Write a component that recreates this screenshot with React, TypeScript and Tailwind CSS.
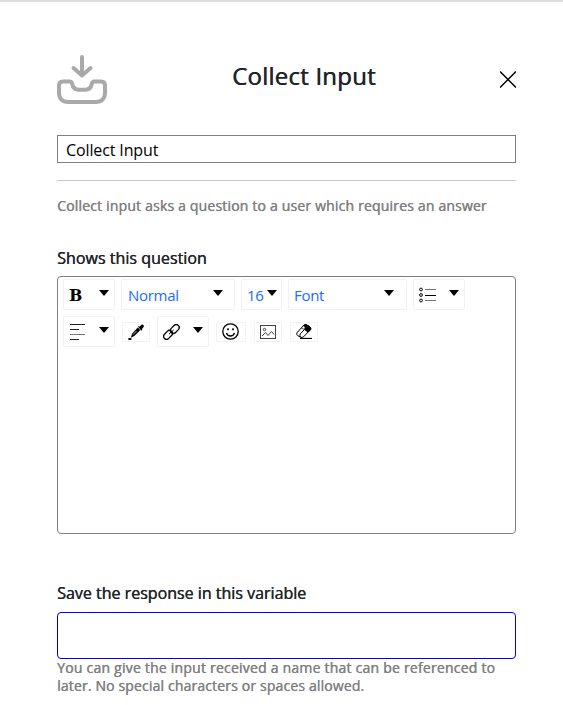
import type { ReactNode } from "react";

function Caret({ className = "" }: { className?: string }) {
  return (
    <svg className={`h-[6px] w-[10px] shrink-0 ${className}`} viewBox="0 0 10 6">
      <path d="M0 0H10L5 6Z" fill="#000" />
    </svg>
  );
}

function Tool({ className, children }: { className: string; children: ReactNode }) {
  return (
    <div className={`flex shrink-0 items-center rounded-[2px] border border-[#f1f1f1] ${className}`}>
      {children}
    </div>
  );
}

function InboxIcon() {
  return (
    <svg className="mt-[52px] h-[50px] w-[50px]" viewBox="0 0 50 50" fill="none" stroke="#a9a9a9" strokeWidth="4" strokeLinecap="round" strokeLinejoin="round">
      <path d="M25 3V21M16.500 14L25 21.500L33.500 14" />
      <path d="M6 27.500H12.500C14 27.500 14.800 28.300 15.200 30C16 33.800 18 35.700 21.500 35.700H28.500C32 35.700 34 33.800 34.800 30C35.200 28.300 36 27.500 37.500 27.500H44C46.500 27.500 48 29 48 31.500V39C48 44.500 44.500 48 39 48H11C5.500 48 2 44.500 2 39V31.500C2 29 3.500 27.500 6 27.500Z" />
    </svg>
  );
}

function ListIcon() {
  return (
    <svg className="h-[16px] w-[18px]" viewBox="0 0 18 16" fill="none" stroke="#000">
      <circle cx="2" cy="2.500" r="1.400" />
      <circle cx="2" cy="8" r="1.400" />
      <circle cx="2" cy="13.500" r="1.400" />
      <path d="M6 2.500H17M6 13.500H17" stroke="#777" />
      <path d="M6 8.500H17" />
    </svg>
  );
}

function AlignIcon() {
  return (
    <svg className="h-[16px] w-[15px]" viewBox="0 0 15 16" stroke="#222">
      <path d="M0 .5H15M0 5.500H9M0 15.500H9" />
      <path d="M0 10.500H15" stroke="#777" />
    </svg>
  );
}

function DropperIcon() {
  return (
    <svg className="h-[16px] w-[16px]" viewBox="0 0 16 16">
      <path d="M9.800 2.600L10.800 2.300L11.600 2.800L13.200 1C14.300-.2 16.600 1.300 15.600 3L14 5L14.200 6L13.400 6.800Z" fill="#000" />
      <path d="M9.800 3.400L4.200 9.600L2.800 13.700L6.300 12L12.400 5.900Z" fill="#000" />
      <path d="M8.500 7L5 10.600" stroke="#fff" strokeWidth=".7" fill="none" />
      <ellipse cx="1.900" cy="15" rx="1.900" ry=".9" fill="#000" />
    </svg>
  );
}

function LinkIcon() {
  return (
    <svg className="h-[16px] w-[17px]" viewBox="0 0 17 16" fill="none" stroke="#000" strokeWidth="1.300">
      <rect x="-5" y="-3" width="10" height="6" rx="3" transform="translate(5 10.900) rotate(-46)" />
      <rect x="-5" y="-3" width="10" height="6" rx="3" transform="translate(11.800 5) rotate(-46)" />
      <path d="M6 10.100L10.700 5.900" strokeWidth="1" />
    </svg>
  );
}

function SmileIcon() {
  return (
    <svg className="-ml-px h-[17px] w-[17px]" viewBox="0 0 17 17" fill="none" stroke="#000" strokeWidth="1.300">
      <circle cx="8.500" cy="8.500" r="7.700" />
      <path d="M4.500 10C5.700 14 11.300 14 12.500 10" />
      <circle cx="6" cy="6.300" r="1" fill="#000" stroke="none" />
      <circle cx="11" cy="6.300" r="1" fill="#000" stroke="none" />
    </svg>
  );
}

function PictureIcon() {
  return (
    <svg className="h-[14px] w-[16px]" viewBox="0 0 16 14" fill="none" stroke="#444">
      <rect x=".5" y=".5" width="15" height="13" />
      <circle cx="4.500" cy="4.500" r="1.200" />
      <path d="M2 11L5.500 7.500L8 10.500L11.500 6.500L14 9.500" />
    </svg>
  );
}

function EraserIcon() {
  return (
    <svg className="h-[15px] w-[17px]" viewBox="0 0 17 15" fill="none" stroke="#000">
      <path d="M1 8.800L7.500 1.500Q8.500.5 10 .6L13.500 2.500Q15.500 4 14.500 5.700L7.500 12.800Q6 14 4.500 13.200L1.700 11.700Q.2 10.700 1 8.800Z" />
      <path d="M7.700 1.700Q8.500.5 10 .6L13.500 2.500Q15.500 4 14.500 5.700L12 8.300L8.700 5.500L9.200 3.500Z" fill="#000" />
      <path d="M8.500 5.500L4.300 9.800Q3.300 11.200 4.500 13" />
      <path d="M5.500 4.300L8.500 5.500" strokeWidth=".7" />
      <path d="M4 14.400H16" strokeWidth="1.100" />
    </svg>
  );
}

export default function App() {
  return (
    <main className="h-[705px] w-[563px] overflow-hidden border-t-2 border-[#dddce8] bg-white px-[57px] font-['Open_Sans','Noto_Sans',sans-serif] text-[#212529]">
      <div className="w-[459px]">
        <header className="flex h-[133px] items-start">
          <InboxIcon />
          <h1 className="ml-[125px] mt-[56px] whitespace-nowrap text-[24px] font-medium leading-[36px] tracking-[0.22px] [text-shadow:0.5px_0_0_#212529]">Collect Input</h1>
          <svg className="ml-auto mt-[69px] h-[17px] w-[16px]" viewBox="0 0 16 17" stroke="#000" strokeWidth="1.500">
            <path d="M0 .5L16 16.500M16 .5L0 16.500" />
          </svg>
        </header>

        <div className="flex h-[28px] items-center border border-[#808080] px-[8px] pt-[2px] text-[16px] leading-[24px] tracking-[-0.12px] text-black">
          Collect Input
        </div>
        <hr className="mt-[17px] border-[#c6c6c6]" />
        <p className="mt-[14px] whitespace-nowrap text-[14px] font-medium leading-[21px] tracking-[0.18px] text-[#808080] [text-shadow:0.4px_0_0_#808080]">
          Collect input asks a question to a user which requires an answer
        </p>

        <h2 className="mt-[30px] whitespace-nowrap text-[16px] font-medium leading-[24px] tracking-[0.03px] [text-shadow:0.4px_0_0_#212529]">Shows this question</h2>

        <section className="mt-[6px] h-[258px] rounded-[4px] border border-[#808080] px-[5px] pt-[2px]">
          <div className="flex gap-[6px] text-[15px] tracking-[-0.3px] text-[#1a6cff]">
            <Tool className="h-[31px] w-[52px] justify-between pl-[5px] pr-[5px]">
              <span className="origin-left scale-x-[1.15] font-['Noto_Serif','DejaVu_Serif',serif] text-[17px] font-bold leading-none text-black">B</span>
              <Caret className="-mt-[3px]" />
            </Tool>
            <Tool className="h-[31px] w-[114px] justify-between pl-[6px] pr-[11px]">
              <span className="pt-[2px]">Normal</span>
              <Caret className="-mt-[3px]" />
            </Tool>
            <Tool className="h-[31px] w-[41px] justify-between pl-[5px] pr-[4px]">
              <span className="pt-[2px]">16</span>
              <Caret className="-mt-[3px]" />
            </Tool>
            <Tool className="h-[31px] w-[119px] justify-between pl-[5px] pr-[12px]">
              <span className="pt-[2px]">Font</span>
              <Caret className="-mt-[3px]" />
            </Tool>
            <Tool className="h-[31px] w-[52px] justify-between pl-[5px] pr-[5px]">
              <ListIcon />
              <Caret className="-mt-[3px]" />
            </Tool>
          </div>
          <div className="mt-[6px] flex items-center">
            <Tool className="h-[31px] w-[52px] justify-between pl-[6px] pr-[5px]">
              <AlignIcon />
              <Caret className="-mt-[3px]" />
            </Tool>
            <Tool className="ml-[7px] h-[20px] w-[28px] justify-center"><DropperIcon /></Tool>
            <Tool className="ml-[7px] h-[31px] w-[52px] justify-between pl-[5px] pr-[5px]">
              <LinkIcon />
              <Caret className="-mt-[3px]" />
            </Tool>
            <Tool className="ml-[7px] h-[20px] w-[30px] justify-center"><SmileIcon /></Tool>
            <Tool className="ml-[8px] h-[20px] w-[28px] justify-center"><PictureIcon /></Tool>
            <Tool className="ml-[8px] h-[20px] w-[28px] justify-center"><EraserIcon /></Tool>
          </div>
        </section>

        <h2 className="mt-[47px] whitespace-nowrap text-[16px] font-medium leading-[24px] [text-shadow:0.4px_0_0_#212529]">Save the response in this variable</h2>
        <input aria-label="Variable name" className="mt-[7px] block h-[47px] w-full rounded-[4px] border border-[#0000ee] bg-white px-2 outline-none" />
        <p className="text-[14px] font-medium leading-[18px] text-[#808080] [text-shadow:0.4px_0_0_#808080]">
          <span className="block whitespace-nowrap tracking-[0.22px]">You can give the input received a name that can be referenced to</span>
          <span className="block whitespace-nowrap tracking-[0.15px]">later. No special characters or spaces allowed.</span>
        </p>
      </div>
    </main>
  );
}
